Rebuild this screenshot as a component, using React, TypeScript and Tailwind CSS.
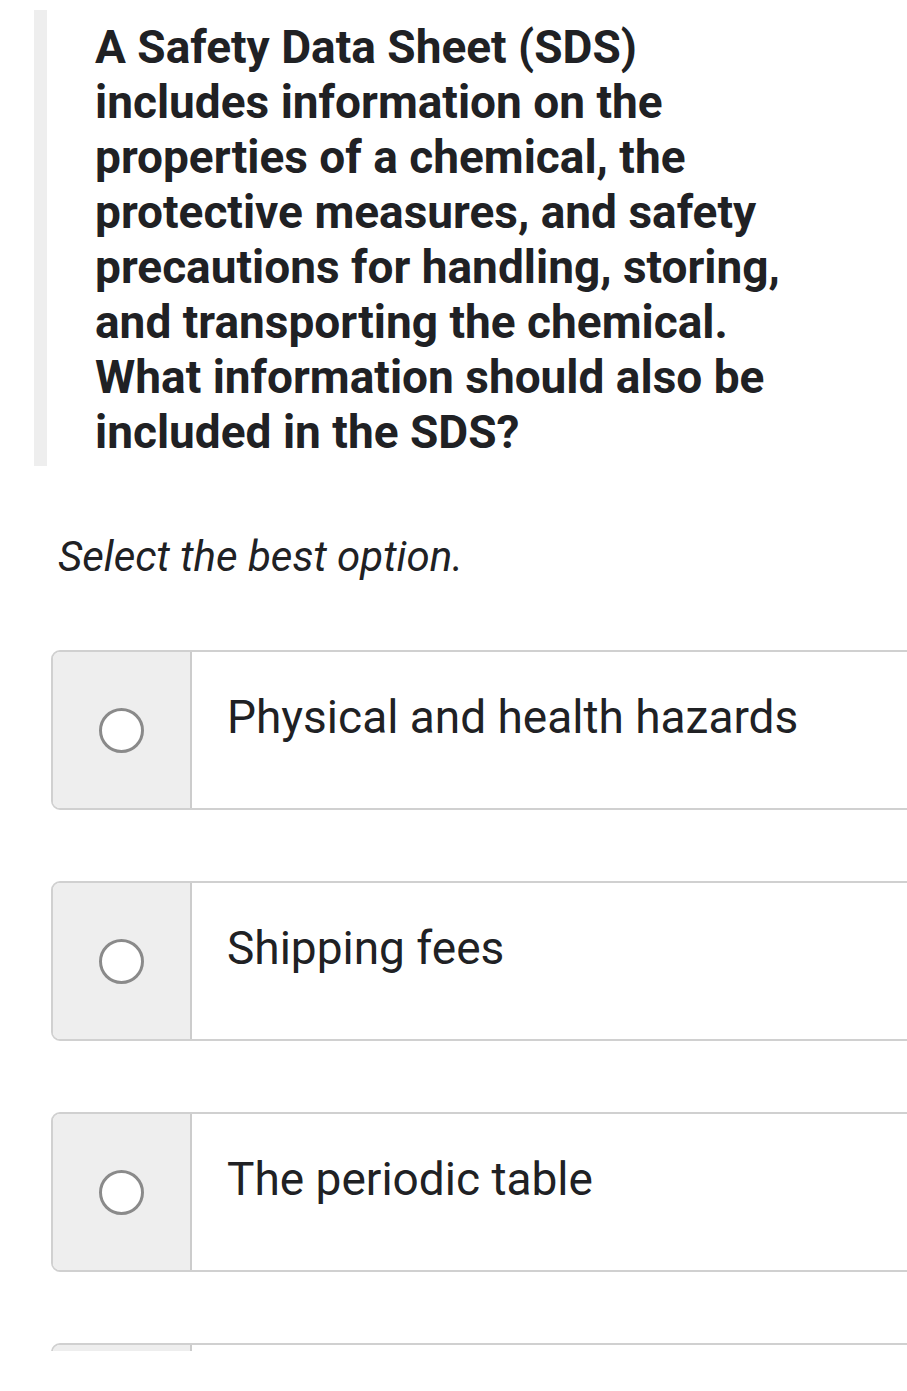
import React from 'react'

const options = ['Physical and health hazards', 'Shipping fees', 'The periodic table']

const Radio = () => (
  <div className="h-[45px] w-[45px] rounded-full border-[3px] border-[#8a8a8a] bg-white" />
)

const OptionBox = ({ label }: { label: string }) => (
  <div className="flex h-[160px] w-[900px] overflow-hidden rounded-[9px] border-2 border-[#d0d0d0] bg-white">
    <div className="flex w-[139px] shrink-0 items-center justify-center border-r-2 border-[#cccccc] bg-[#eeeeee]">
      <Radio />
    </div>
    <div className="pl-[35px] pt-[40px] text-[46px] leading-[50px] text-[#202124]">{label}</div>
  </div>
)

export default function App() {
  return (
    <div
      className="h-[1391px] w-[907px] overflow-hidden bg-white"
      style={{ fontFamily: 'Roboto, "Liberation Sans", sans-serif' }}
    >
      {/* question block */}
      <div className="flex pl-[34px] pt-[10px]">
        <div className="w-[13px] shrink-0 bg-[#eeeeee]" />
        <div className="pb-[6px] pl-[48px] pt-[10px] text-[46px] font-bold leading-[55px] text-[#202124]">
          A Safety Data Sheet (SDS)
          <br />
          includes information on the
          <br />
          properties of a chemical, the
          <br />
          protective measures, and safety
          <br />
          precautions for handling, storing,
          <br />
          and transporting the chemical.
          <br />
          What information should also be
          <br />
          included in the SDS?
        </div>
      </div>

      <div className="pl-[58px] pt-[66px] text-[42px] italic leading-[50px] text-[#202124]">
        Select the best option.
      </div>

      <div className="flex flex-col gap-[71px] pl-[51px] pt-[68px]">
        {options.map((o) => (
          <OptionBox key={o} label={o} />
        ))}
        {/* next option, cut off by the screen edge */}
        <div className="h-[8px] overflow-hidden">
          <OptionBox label="" />
        </div>
      </div>
    </div>
  )
}
